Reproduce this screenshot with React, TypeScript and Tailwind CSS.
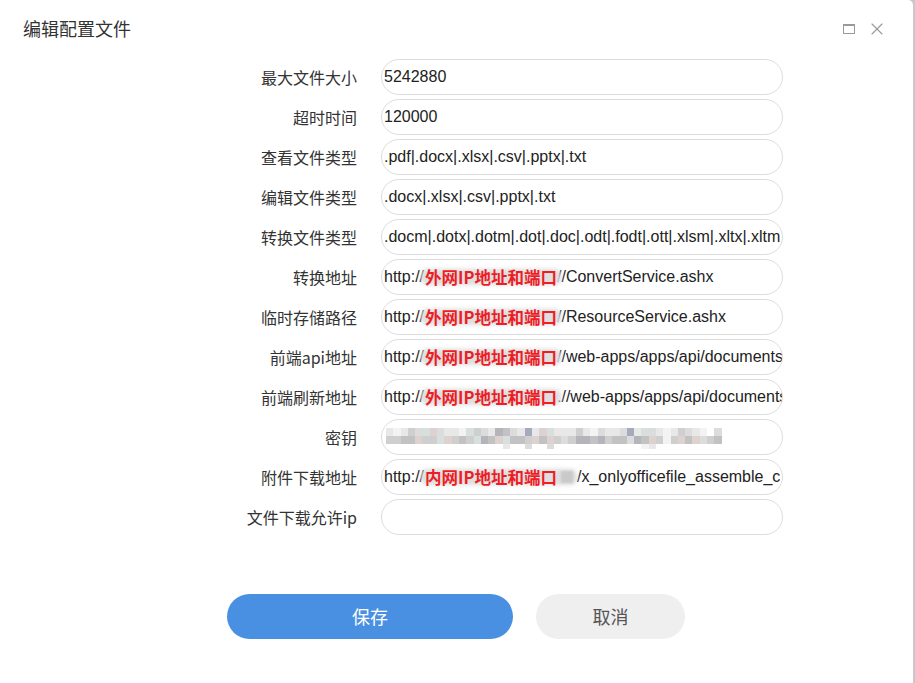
import { X } from 'lucide-react';

const cjk = '"Noto Sans CJK SC", "Liberation Sans", sans-serif';

// mosaic palette for the blurred secret
const palette = [
  'bg-transparent',
  'bg-[#f3f3f3]',
  'bg-[#e8e8e8]',
  'bg-[#dcdcdc]',
  'bg-[#cfcfcf]',
  'bg-[#c2c2c2]',
  'bg-[#b4b4ba]',
  'bg-[#a5aabd]',
  'bg-[#d8dfdf]',
  'bg-[#ddd2cf]',
];
const topRow = '2124389322184326532729822242132237283212432103';
const midRow = '4455944894548659855495943466564553659414959345';
const lowRow = '0000000000000000200300300000000000012000000000';

function Redacted({ text, inner }: { text: string; inner?: boolean }) {
  return (
    <span className="relative inline-flex items-center ml-[1px]">
      <span className="absolute -left-1 -right-1 top-0 bottom-0 rounded-md bg-[#dedede] blur-[2px]" />
      <span className="relative font-bold text-[16.5px] text-[#ee1c25] leading-none" style={{ fontFamily: cjk }}>
        {text}
      </span>
      {inner && <span className="relative ml-1 w-3 h-3 bg-[#c9c9c9] blur-[1px]" />}
    </span>
  );
}

function Field({ children }: { children?: React.ReactNode }) {
  return (
    <div className="w-[402px] h-[36px] rounded-full border border-[#dcdcdc] bg-white flex items-center pl-[2px] overflow-hidden whitespace-nowrap text-[16px] text-[#222]">
      {children}
    </div>
  );
}

function Row({ label, children }: { label: string; children?: React.ReactNode }) {
  return (
    <div className="flex items-center h-[40px]">
      <div className="w-[357px] text-right text-[16px] text-[#333]" style={{ fontFamily: cjk }}>{label}</div>
      <div className="ml-6">
        <Field>{children}</Field>
      </div>
    </div>
  );
}

export default function App() {
  return (
    <div className="w-[915px] h-[683px] flex bg-[#c8c8c8]" style={{ fontFamily: '"Liberation Sans", Arial, sans-serif' }}>
      <div className="w-[913px] h-full bg-white rounded-tr-[5px] flex flex-col">
        <div className="h-[57px] flex items-center pl-[23px] pr-[26px] shrink-0">
          <h1 className="text-[18px] text-[#333] flex-1" style={{ fontFamily: cjk }}>编辑配置文件</h1>
          <div className="w-[12px] h-[10px] border-[1.5px] border-[#9a9a9a] border-t-[2px] mr-[12px]" />
          <X size={20} strokeWidth={1.4} className="text-[#9a9a9a]" />
        </div>

        <div className="flex flex-col">
          <Row label="最大文件大小">5242880</Row>
          <Row label="超时时间">120000</Row>
          <Row label="查看文件类型">.pdf|.docx|.xlsx|.csv|.pptx|.txt</Row>
          <Row label="编辑文件类型">.docx|.xlsx|.csv|.pptx|.txt</Row>
          <Row label="转换文件类型">.docm|.dotx|.dotm|.dot|.doc|.odt|.fodt|.ott|.xlsm|.xltx|.xltm</Row>
          <Row label="转换地址">
            http://<Redacted text="外网IP地址和端口" />//ConvertService.ashx
          </Row>
          <Row label="临时存储路径">
            http://<Redacted text="外网IP地址和端口" />//ResourceService.ashx
          </Row>
          <Row label="前端api地址">
            http://<Redacted text="外网IP地址和端口" />//web-apps/apps/api/documents
          </Row>
          <Row label="前端刷新地址">
            http://<Redacted text="外网IP地址和端口" />.//web-apps/apps/api/documents
          </Row>
          <Row label="密钥">
            <div className="flex flex-col ml-[2px] mt-[2px]">
              <div className="flex">
                {topRow.split('').map((c, i) => (
                  <div key={i} className={`w-[7.3px] h-[8px] ${palette[Number(c)]}`} />
                ))}
              </div>
              <div className="flex">
                {midRow.split('').map((c, i) => (
                  <div key={i} className={`w-[7.3px] h-[8px] ${palette[Number(c)]}`} />
                ))}
              </div>
              <div className="flex">
                {lowRow.split('').map((c, i) => (
                  <div key={i} className={`w-[7.3px] h-[5px] ${palette[Number(c)]}`} />
                ))}
              </div>
            </div>
          </Row>
          <Row label="附件下载地址">
            http://<Redacted text="内网IP地址和端口" inner />
            <span className="ml-1">/x_onlyofficefile_assemble_c</span>
          </Row>
          <Row label="文件下载允许ip" />
        </div>

        <div className="flex mt-[57px] pl-[227px] gap-[23px]">
          <button className="w-[286px] h-[45px] rounded-full bg-[#4a90e2] text-white text-[18px]" style={{ fontFamily: cjk }}>
            保存
          </button>
          <button className="w-[149px] h-[45px] rounded-full bg-[#efefef] text-[#555] text-[18px]" style={{ fontFamily: cjk }}>
            取消
          </button>
        </div>
      </div>
    </div>
  );
}
